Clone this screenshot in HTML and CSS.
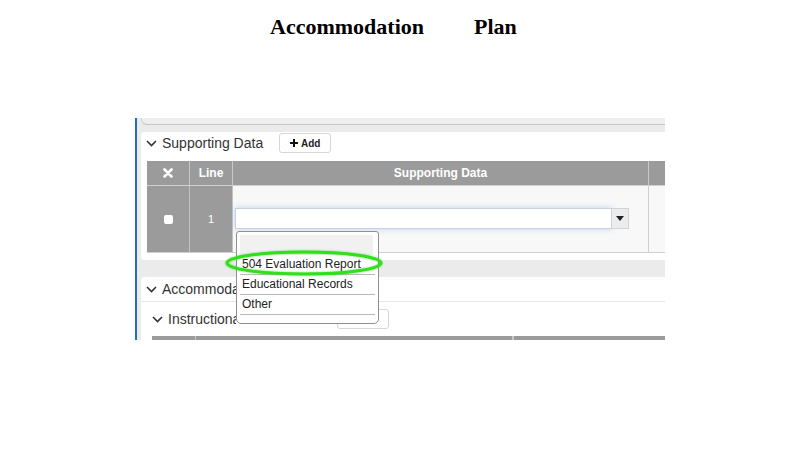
FILE: index.html
```html
<!DOCTYPE html>
<html lang="en">
<head>
    <meta charset="UTF-8">
    <meta name="viewport" content="width=device-width, initial-scale=1.0">
    <title>Accommodation Plan</title>
    <link rel="stylesheet" href="styles.css">
</head>
<body>
    <h1 class="title"><span>Accommodation</span><span>Plan</span></h1>

    <div class="shot">
        <div class="prev"></div>

        <section class="panel">
            <div class="panel-head">
                <svg class="chev" width="11" height="7" viewBox="0 0 11 7"><polyline points="1,1 5.5,5.5 10,1"/></svg>
                <span class="panel-title">Supporting Data</span>
                <button class="add-btn">
                    <svg width="8" height="8" viewBox="0 0 8 8"><path d="M3 0h2v3h3v2H5v3H3V5H0V3h3z"/></svg>
                    Add
                </button>
            </div>

            <div class="grid">
                <div class="th">
                    <svg width="10" height="10" viewBox="0 0 10 10"><path d="M1.5 1.5l7 7M8.5 1.5l-7 7"/></svg>
                </div>
                <div class="th">Line</div>
                <div class="th">Supporting Data</div>
                <div class="th"></div>

                <div class="td dark"><span class="check"></span></div>
                <div class="td dark">1</div>
                <div class="td light">
                    <div class="combo">
                        <div class="combo-input"></div>
                        <div class="combo-btn">
                            <svg width="8" height="5" viewBox="0 0 8 5"><polygon points="0,0 8,0 4,5"/></svg>
                        </div>
                    </div>
                </div>
                <div class="td light last"></div>
            </div>
        </section>

        <section class="panel panel-acc">
            <div class="acc-head">
                <svg class="chev" width="11" height="7" viewBox="0 0 11 7"><polyline points="1,1 5.5,5.5 10,1"/></svg>
                <span class="panel-title cut acc-title">Accommodations</span>
            </div>
            <div class="sub-head">
                <svg class="chev" width="11" height="7" viewBox="0 0 11 7"><polyline points="1,1 5.5,5.5 10,1"/></svg>
                <span class="panel-title cut sub-title">Instructional</span>
                <button class="add-btn sub-btn"></button>
            </div>
            <div class="bar">
                <span class="bar-cell one"></span>
                <span class="bar-cell two"></span>
                <span class="bar-cell"></span>
            </div>
        </section>

        <!-- open list of the combo box -->
        <ul class="dropdown">
            <li class="blank"></li>
            <li>504 Evaluation Report</li>
            <li>Educational Records</li>
            <li>Other</li>
        </ul>

        <svg class="ring" width="160" height="28" viewBox="0 0 160 28">
            <ellipse cx="79" cy="13" rx="77" ry="11"/>
        </svg>
    </div>
</body>
</html>
```

FILE: styles.css
```css
body {
    margin: 0;
    background-color: #fff;
    font-family: "Liberation Sans", Arial, sans-serif;
}

.title {
    margin: 0;
    padding: 14px 0 0 270px;
    display: flex;
    gap: 50px;
    font-family: "Liberation Serif", "Times New Roman", serif;
    font-size: 22px;
    line-height: 26px;
    font-weight: bold;
    color: #000;
}

.shot {
    position: relative;
    margin: 78px 0 0 135px;
    width: 528px;
    height: 222px;
    border-left: 2px solid #1f70b4;
    background-color: #ebebeb;
    overflow: hidden;
}

.prev {
    margin-left: 4px;
    width: 620px;
    height: 6px;
    background-color: #eeeeee;
    border-left: 1px solid #cfcfcf;
    border-bottom: 1px solid #c6c6c6;
    border-bottom-left-radius: 6px;
    margin-bottom: 7px;
}

.panel {
    margin-left: 4px;
    width: 620px;
    background-color: #fff;
    border-radius: 4px;
    padding: 0 0 7px 6px;
}

.panel-head {
    display: flex;
    align-items: center;
    height: 22px;
    margin-bottom: 7px;
}

.chev {
    fill: none;
    stroke: #333;
    stroke-width: 1.6;
    margin-right: 5px;
    flex-shrink: 0;
}

.panel-head .chev {
    margin-left: -1px;
}

.panel-title {
    font-size: 14px;
    color: #333;
    white-space: nowrap;
}

/* titles that run under the open list */
.cut {
    overflow: hidden;
    flex-shrink: 0;
}

.acc-title {
    width: 74px;
}

.sub-title {
    width: 68px;
}

.add-btn {
    display: flex;
    align-items: center;
    justify-content: center;
    gap: 3px;
    margin-left: 16px;
    width: 52px;
    height: 20px;
    padding: 0;
    background-color: #fff;
    border: 1px solid #d6d6d6;
    border-radius: 3px;
    font-family: "Liberation Sans", Arial, sans-serif;
    font-size: 10px;
    font-weight: bold;
    color: #222;
}

.add-btn svg {
    fill: #111;
}

.grid {
    display: grid;
    grid-template-columns: 43px 43px 416px 118px;
    grid-template-rows: 25px 67px;
}

.th {
    display: flex;
    align-items: center;
    justify-content: center;
    background-color: #9b9b9b;
    border-right: 1px solid #c8c8c8;
    border-bottom: 1px solid #d0d0d0;
    color: #fff;
    font-size: 12px;
    font-weight: bold;
}

.th svg {
    stroke: #fff;
    stroke-width: 2.6;
    stroke-linecap: round;
}

.td {
    display: flex;
    align-items: center;
    border-bottom: 1px solid #cfcfcf;
    font-size: 11px;
}

.td.dark {
    justify-content: center;
    background-color: #9b9b9b;
    border-right: 1px solid #c2c2c2;
    color: #fff;
}

.td.light {
    background-color: #f8f8f8;
    border-right: 1px solid #cfcfcf;
    padding-left: 2px;
}

.td.last {
    border-right: none;
}

.check {
    width: 9px;
    height: 9px;
    background-color: #fff;
    border-radius: 2px;
    margin-left: 1px;
}

.combo {
    display: flex;
    height: 21px;
    margin-top: -1px;
}

.combo-input {
    width: 375px;
    background-color: #fff;
    border: 1px solid #c9d3dd;
    box-shadow: 0 0 6px rgba(120, 170, 220, 0.45);
}

.combo-btn {
    display: flex;
    align-items: center;
    justify-content: center;
    width: 16px;
    background-color: #ececec;
    border: 1px solid #d4d4d4;
    border-left: none;
}

.combo-btn svg {
    fill: #222;
}

.panel-acc {
    margin-top: 17px;
    padding: 0;
    height: 80px;
    border-radius: 4px 0 0 0;
}

.acc-head {
    display: flex;
    align-items: center;
    height: 24px;
    padding-left: 5px;
    border-bottom: 1px solid #e6e6e6;
}

.sub-head {
    display: flex;
    align-items: center;
    height: 34px;
    padding-left: 11px;
}

.sub-btn {
    margin-left: 101px;
}

.bar {
    display: flex;
    margin-left: 11px;
    height: 8px;
    background-color: #9b9b9b;
}

.bar-cell {
    border-right: 1px solid #c8c8c8;
}

.bar-cell.one {
    width: 43px;
}

.bar-cell.two {
    width: 316px;
}

.dropdown {
    position: absolute;
    left: 99px;
    top: 113px;
    width: 143px;
    height: 93px;
    margin: 0;
    padding: 3px 0 0 0;
    list-style: none;
    box-sizing: border-box;
    background-color: #fff;
    border: 1px solid #8f8f8f;
    border-radius: 3px 3px 5px 5px;
    font-size: 12px;
    color: #222;
}

.dropdown li {
    height: 19px;
    line-height: 19px;
    margin: 0 3px;
    padding-left: 2px;
    border-bottom: 1px solid #b9b9b9;
    white-space: nowrap;
}

.dropdown li.blank {
    height: 20px;
    margin: 0 5px 0 3px;
    background-color: #f1f1f1;
    border-bottom: none;
}

.ring {
    position: absolute;
    left: 88px;
    top: 132px;
    fill: none;
    stroke: #2fe01a;
    stroke-width: 3;
    filter: drop-shadow(0 0 1px rgba(40, 200, 20, 0.6));
}
```
